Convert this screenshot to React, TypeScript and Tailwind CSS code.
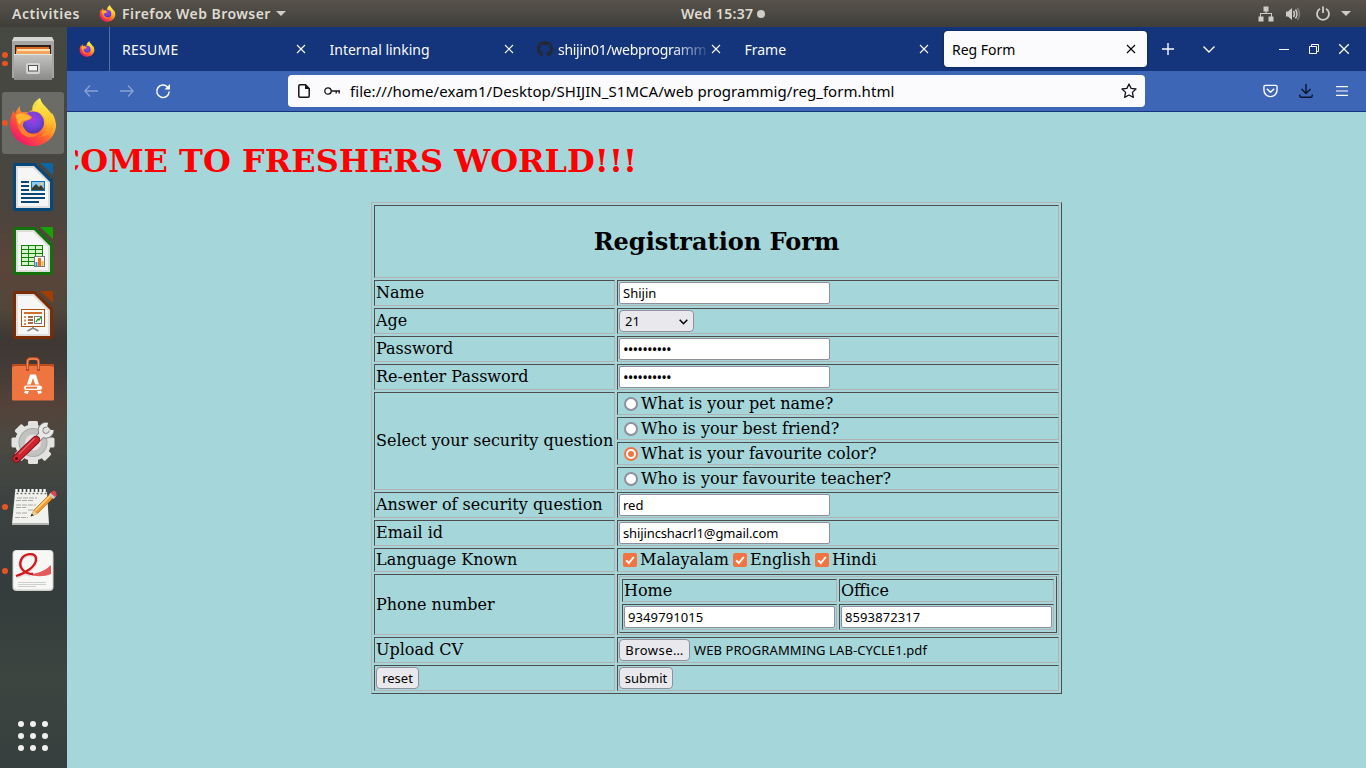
import React from 'react';

const ui = "font-['Noto_Sans','Open_Sans',sans-serif]";

function FirefoxLogo({ id, className }: { id: string; className: string }) {
  return (
    <svg viewBox="0 0 48 50" className={className}>
      <defs>
        <linearGradient id={`${id}-body`} x1="0.85" y1="0.1" x2="0.2" y2="0.95">
          <stop offset="0" stopColor="#fff04a" />
          <stop offset="0.35" stopColor="#ffb02c" />
          <stop offset="0.62" stopColor="#ff5c34" />
          <stop offset="1" stopColor="#f0136b" />
        </linearGradient>
        <radialGradient id={`${id}-globe`} cx="0.5" cy="0.35" r="0.7">
          <stop offset="0" stopColor="#a43be0" />
          <stop offset="0.5" stopColor="#7543dc" />
          <stop offset="1" stopColor="#4a35a8" />
        </radialGradient>
        <linearGradient id={`${id}-flame`} x1="0.5" y1="0" x2="0.6" y2="1">
          <stop offset="0" stopColor="#fff44f" />
          <stop offset="0.6" stopColor="#ffc52e" />
          <stop offset="1" stopColor="#ff8028" />
        </linearGradient>
      </defs>
      <path d="M11 9c-.5 3 0 5 2 6.500 2-.5 4-.5 6 0l5-3C30 8 29 4 31 1c1 6 6 8 9 13l2 4 1-2c3 5 4 9 4 13C46 41 36 49 24 49S1 39 1 27c0-5 1-9 3-12l1-2c0 2 0 3 1 4 1-3 3-6 5-8z" fill={`url(#${id}-body)`} />
      <path d="M31 1c-7 4-9 10-7 13 7 0 14 6 14 14 0 6-3 10-8 12 8 0 14-5 15-13 1-7-2-11-6-14-3-4-7-7-8-12z" fill={`url(#${id}-flame)`} opacity="0.9" />
      <circle cx="24" cy="25.500" r="11" fill={`url(#${id}-globe)`} />
      <path d="M6 18c4-3 9-3 13-1l4 3c-1 3-4 3-6 4-3 1-4 4-2 7 3 6 9 7 14 6-4 5-14 4-18-3-3-5-3-10-5-16z" fill="#ff7f2e" />
      <path d="M7 18c5-3 10-1 15 2 0 2-3 3-6 3-3 1-5 2-5 5-3-3-3-7-4-10z" fill="#ffb52f" />
    </svg>
  );
}

function FilesIcon() {
  return (
    <svg viewBox="0 0 44 46" className="h-[46px] w-11">
      <defs>
        <linearGradient id="cab" x1="0" y1="0" x2="0" y2="1">
          <stop offset="0" stopColor="#c4c4c2" />
          <stop offset="1" stopColor="#8b8b89" />
        </linearGradient>
      </defs>
      <path d="M3 1h38l2 4v37H1V5z" fill="#a5a5a3" />
      <path d="M3 1h38l2 4H1z" fill="#d4d4d2" />
      <rect x="4" y="9" width="36" height="10" fill="#2e211b" />
      <rect x="5" y="11" width="33" height="7" fill="#e06b26" />
      <rect x="6" y="13" width="33" height="2" fill="#ffe0b0" />
      <rect x="5" y="15" width="34" height="3" fill="#f2a55c" />
      <path d="M3 18h38v26H3z" fill="url(#cab)" />
      <path d="M3 18h38v1H3z" fill="#e6e6e4" />
      <rect x="15" y="27" width="14" height="11" rx="2" fill="#d4d4d2" />
      <rect x="17.500" y="29.500" width="9" height="5.500" fill="#f4f4f4" stroke="#555" />
    </svg>
  );
}

function OfficeDoc({ dark, fold, children }: { dark: string; fold: string; children: React.ReactNode }) {
  return (
    <svg viewBox="0 0 40 48" className="h-12 w-10">
      <path d="M2 0h20l18 17v29q0 2-2 2H2q-2 0-2-2V2q0-2 2-2z" fill={dark} />
      <path d="M3 3h18l16 16v26H3z" fill="#dededc" />
      <path d="M5 5h15l15 15v23H5z" fill="#f6f6f6" />
      <path d="M27 0h12q1 0 1 1v11z" fill={fold} />
      {children}
    </svg>
  );
}

function WriterIcon() {
  return (
    <OfficeDoc dark="#06487a" fold="#0d66a4">
      <path d="M8 19h8M8 23h8M8 27h8M8 31h24M8 35h24M8 39h18" stroke="#0a4673" strokeWidth="2" />
      <rect x="18.500" y="18.500" width="13" height="9" fill="#8ec8ee" stroke="#1272b4" />
      <path d="M19 27v-2l4-4 3 3 2-2 3 4v1z" fill="#3b3a2e" />
      <circle cx="28.500" cy="21" r="1.300" fill="#f7d25a" />
    </OfficeDoc>
  );
}

function CalcIcon() {
  return (
    <OfficeDoc dark="#14700b" fold="#18a303">
      <rect x="8.500" y="18.500" width="21" height="20" fill="#d3f5c9" stroke="#148007" />
      <path d="M8 22.500h22M8 26.500h22M8 30.500h22M8 34.500h22M15.500 18v21M22.500 18v21" stroke="#148007" />
      <rect x="21.500" y="29.500" width="10" height="10" fill="#fff" stroke="#777" />
      <path d="M23.500 39v-4" stroke="#2a8fd8" strokeWidth="2" />
      <path d="M26.500 39v-8" stroke="#ed6b1c" strokeWidth="3" />
      <path d="M29.500 39v-5" stroke="#f3b72c" strokeWidth="2" />
    </OfficeDoc>
  );
}

function ImpressIcon() {
  return (
    <OfficeDoc dark="#7a2c06" fold="#a33e03">
      <rect x="8.500" y="18.500" width="23" height="17" fill="#fff" stroke="#b4500f" />
      <path d="M11 22h18" stroke="#d26d2b" strokeWidth="2" />
      <path d="M12 25v9" stroke="#e08b52" strokeWidth="2" strokeDasharray="2 1.500" />
      <path d="M15 26h5M15 29h5M15 32h5" stroke="#8c3608" strokeWidth="1.700" />
      <rect x="21.500" y="25.500" width="7" height="7" fill="#fff" stroke="#777" />
      <path d="M23 31l2-3 1 1 2-3" fill="none" stroke="#149b10" strokeWidth="1.300" />
      <path d="M20 36v1.500M20 37l-5.500 3M20 37l5.500 3" fill="none" stroke="#888" strokeWidth="1.800" />
    </OfficeDoc>
  );
}

function SoftwareIcon() {
  return (
    <svg viewBox="0 0 42 44" className="h-11 w-[42px]">
      <rect x="0" y="7" width="42" height="36.500" rx="1" fill="#ee7440" />
      <path d="M0 7h42v3l-3-1H3l-3 1z" fill="#b94c1e" />
      <path d="M15.500 14V5q0-3.500 3.500-3.500h4Q26.500 1.500 26.500 5v9" fill="none" stroke="#b94c1e" strokeWidth="3" />
      <path d="M15.500 12V5q0-3 3.500-3h4q3.500 0 3.500 3v7" fill="none" stroke="#f28a5c" strokeWidth="1.300" />
      <path d="M14 36.500l5.500-17h3l5.500 17" fill="none" stroke="#fff" strokeWidth="3.800" />
      <rect x="11.500" y="28" width="19" height="5.500" rx="2.700" fill="#fff" stroke="#ee7440" />
      <path d="M14 30.700h11" stroke="#ee7440" strokeWidth="2" />
    </svg>
  );
}

function SettingsIcon() {
  return (
    <svg viewBox="0 0 44 46" className="h-[46px] w-11">
      <g fill="#e2e2e0">
        {[0, 45, 90, 135].map((a) => (
          <rect key={a} x="17" y="1" width="10" height="43" rx="1.500" transform={`rotate(${a} 22 22.500)`} />
        ))}
        <circle cx="22" cy="22.500" r="18" />
      </g>
      <circle cx="22" cy="22.500" r="14.500" fill="#a9a9a7" />
      <circle cx="22" cy="22.500" r="13.500" fill="#c2c2c0" />
      <circle cx="22" cy="22.500" r="8" fill="#e2e2e0" />
      <path d="M36.500 5A5.500 5.500 0 1 0 40.500 10" fill="none" stroke="#6f6f6d" strokeWidth="5.500" />
      <path d="M26.500 19l5-5" stroke="#6f6f6d" strokeWidth="7" />
      <path d="M36.500 5A5.500 5.500 0 1 0 40.500 10" fill="none" stroke="#e8e8e6" strokeWidth="4" />
      <path d="M26 19.500l6-6" stroke="#e8e8e6" strokeWidth="5.500" />
      <path d="M5.500 38.500L25 20" stroke="#861019" strokeWidth="8.500" strokeLinecap="round" />
      <path d="M5.500 38.500L25 20" stroke="#ce2430" strokeWidth="6.500" strokeLinecap="round" />
      <path d="M8 34L23.500 18.500" stroke="#e8626a" strokeWidth="1.300" />
      <circle cx="5.500" cy="38.500" r="1.500" fill="#4a1013" />
    </svg>
  );
}

function EditorIcon() {
  return (
    <svg viewBox="0 0 48 38" className="ml-[3px] h-[38px] w-12">
      <path d="M4 4h32l2 32H1z" fill="#f1f1ee" />
      <path d="M1 35h37v2H1z" fill="#b4b4b0" />
      <path d="M5.500 5V1M9.500 5V1M13.500 5V1M17.500 5V1M21.500 5V1M25.500 5V1M29.500 5V1M33.500 5V1" stroke="#f8f8f8" strokeWidth="2.400" />
      <path d="M5.500 5.500h30" stroke="#77756f" strokeDasharray="2 2" strokeWidth="1.500" />
      <path d="M6 10h20M5 12.500h18M5 17h20M5 19.500h10M17 22h8M5 25h12M4 29.500h13" stroke="#aaa9a5" strokeDasharray="5 1" />
      <path d="M20 28l3-6L40 5l3.500 3.500-17 17z" fill="#f29b33" stroke="#b96a13" strokeWidth="0.700" />
      <path d="M24 23L40.500 6.500" stroke="#ffd27d" strokeWidth="1.500" />
      <path d="M20 28l2.500-5.500 4 3.500z" fill="#e8cf9e" />
      <path d="M19.500 28.500l1.300-2.800 2 1.600z" fill="#222" />
      <path d="M38 6.500l2.500-2.500 4.500 4.500-2.500 2.500z" fill="#c9ccd1" />
      <path d="M40.500 4q2.500-2 4-.5t1 4l-1.500 1.500-4.500-4z" fill="#e0434e" />
    </svg>
  );
}

function ViewerIcon() {
  return (
    <svg viewBox="0 0 42 43" className="mb-[2px] h-[43px] w-[42px]">
      <rect x="0.500" y="1" width="41" height="41" rx="4" fill="#cfcfcd" />
      <rect x="1.500" y="1.500" width="39" height="39" rx="3.500" fill="#f7f7f6" />
      <path d="M16 25c9 0 17-3 23-9v9c-7 3-16 3-23 0z" fill="#e25a5a" />
      <path d="M4 28C14 25 25 18 24 10c-1-6-12-5-15 2-3 8 3 13 10 14" fill="none" stroke="#b9b9b9" strokeWidth="3.500" opacity="0.400" />
      <path d="M4 27C14 24 25 17 24 9c-1-6-12-5-15 2-3 8 4 14 12 14" fill="none" stroke="#d3171e" strokeWidth="2.300" />
      <path d="M6 33.500h28M6 35.500h28M6 37.500h18" stroke="#cfcfcd" />
    </svg>
  );
}

function DockItem({ children, running = 0, active = false }: { children: React.ReactNode; running?: number; active?: boolean }) {
  return (
    <div className="relative flex h-16 w-full shrink-0 items-center justify-center">
      <div className={active ? 'flex h-[62px] w-[62px] items-center justify-center rounded-[3px] bg-white/20' : 'flex items-center justify-center'}>
        {children}
      </div>
      <div className="absolute left-[2px] top-0 flex h-full flex-col items-center justify-center gap-[3px]">
        {Array.from({ length: running }, (_, i) => (
          <span key={i} className="h-[5.500px] w-[5.500px] rounded-full bg-[#e95420]" />
        ))}
      </div>
    </div>
  );
}

function Dock() {
  return (
    <nav className="flex w-[67px] shrink-0 flex-col bg-[linear-gradient(180deg,#464842_0%,#474640_17%,#4b443e_25%,#5c443a_32%,#51463a_38%,#3e3833_42%,#423b37_46%,#54423a_51%,#4b4941_56%,#3e4341_63%,#343c3c_76%,#3d4541_88%,#353f3d_100%)] pr-[1px]">
      <DockItem running={2}><FilesIcon /></DockItem>
      <DockItem running={1} active><FirefoxLogo id="dock" className="mb-[3px] h-[50px] w-12" /></DockItem>
      <DockItem><WriterIcon /></DockItem>
      <DockItem><CalcIcon /></DockItem>
      <DockItem><ImpressIcon /></DockItem>
      <DockItem><SoftwareIcon /></DockItem>
      <DockItem><SettingsIcon /></DockItem>
      <DockItem running={1}><EditorIcon /></DockItem>
      <DockItem running={1}><ViewerIcon /></DockItem>
      <div className="mx-auto mb-[17px] mt-auto grid grid-cols-3 gap-[6px]">
        {Array.from({ length: 9 }, (_, i) => <span key={i} className="h-[6px] w-[6px] rounded-full bg-[#f0f0ee]" />)}
      </div>
    </nav>
  );
}

function TopBar() {
  return (
    <header className="flex h-[27px] shrink-0 items-center bg-[linear-gradient(180deg,#57534b,#3f3e39)] text-[14px] font-semibold text-[#dfdbd2]">
      <div className="flex w-[681px] shrink-0 items-center pl-3">
        <span className="w-[87px] tracking-[0.550px]">Activities</span>
        <FirefoxLogo id="menu" className="h-[17px] w-[17px]" />
        <span className="ml-[6px] tracking-[0.450px]">Firefox Web Browser</span>
        <svg viewBox="0 0 10 5" className="ml-[5px] h-[5px] w-[10px]"><path d="M0 0h10L5 5z" fill="#cfccc6" /></svg>
      </div>
      <div className="flex items-center gap-1">
        <span className="tracking-[0.300px]">Wed 15:37</span>
        <span className="h-2 w-2 rounded-full bg-[#cfccc6]" />
      </div>
      <div className="flex flex-1 items-center justify-end pr-[15px]">
        <svg viewBox="0 0 16 16" className="h-4 w-4" fill="#cfccc6"><path d="M5.500 0.500h5v5H8.500V7H14v3.500h1.500v5h-5v-5H13V8H3v2.500h2.500v5h-5v-5H2V7h5.500V5.500h-2z" /></svg>
        <svg viewBox="0 0 16 16" className="ml-[11px] h-4 w-4" fill="none" stroke="#cfccc6">
          <path d="M1 5.500h2L7 2v12L3 10.500H1z" fill="#cfccc6" stroke="none" />
          <path d="M8.500 5q2 3 0 6" strokeWidth="1.500" /><path d="M10.500 3.500q3 4.500 0 9" strokeWidth="1.500" /><path d="M12.500 2q4 6 0 12" strokeWidth="1.500" opacity="0.400" />
        </svg>
        <svg viewBox="0 0 16 16" className="ml-[14px] h-4 w-4" fill="none" stroke="#cfccc6" strokeWidth="1.800"><path d="M5 2.700a6 6 0 1 0 6 0M8 .5v6.500" /></svg>
        <svg viewBox="0 0 10 5" className="ml-[10px] h-[5px] w-[10px]"><path d="M0 0h10L5 5z" fill="#cfccc6" /></svg>
      </div>
    </header>
  );
}

function Cross({ className }: { className: string }) {
  return <svg viewBox="0 0 10 10" className={className} fill="none" stroke="currentColor" strokeWidth="1.100"><path d="M1 1l8 8M9 1L1 9" /></svg>;
}

function Tab({ title, active = false, icon, tracking = '' }: { title: string; active?: boolean; icon?: React.ReactNode; tracking?: string }) {
  return (
    <div className={`flex shrink-0 items-center pl-2 ${active ? 'h-9 w-[203px] rounded-[4px] bg-[#fbfbfe] pr-[11px] text-black shadow-[0_0_3px_rgba(0,0,0,0.4)]' : 'h-full w-[207.500px] pr-[15.500px] text-[#fbfbfe]'}`}>
      {icon}
      <span className={`min-w-0 flex-1 overflow-hidden whitespace-nowrap text-[14px] ${tracking} ${icon ? '[mask-image:linear-gradient(90deg,black_75%,transparent_102%)]' : ''}`}>{title}</span>
      <Cross className={icon ? 'ml-[2px] h-[10px] w-[10px] shrink-0' : 'h-[10px] w-[10px] shrink-0'} />
    </div>
  );
}

function GithubMark() {
  return (
    <svg viewBox="0 0 16 16" className="mr-[5px] h-4 w-4 shrink-0" fill="#24292f">
      <path d="M8 0C3.580 0 0 3.580 0 8c0 3.540 2.290 6.530 5.470 7.590.4.070.55-.17.55-.38 0-.19-.01-.82-.01-1.490-2.010.37-2.530-.49-2.690-.94-.09-.23-.48-.94-.82-1.130-.28-.15-.68-.52-.01-.53.63-.01 1.080.58 1.230.82.72 1.210 1.870.87 2.330.66.07-.52.28-.87.51-1.070-1.780-.2-3.640-.89-3.640-3.950 0-.87.31-1.590.82-2.150-.08-.2-.36-1.020.08-2.120 0 0 .67-.21 2.200.82.64-.18 1.320-.27 2-.27s1.360.09 2 .27c1.530-1.040 2.200-.82 2.200-.82.44 1.100.16 1.920.08 2.120.51.56.82 1.270.82 2.150 0 3.070-1.870 3.750-3.650 3.950.29.25.54.73.54 1.480 0 1.070-.01 1.930-.01 2.200 0 .21.15.46.55.38A8.010 8.010 0 0 0 16 8c0-4.420-3.580-8-8-8z" />
    </svg>
  );
}

function TabStrip() {
  return (
    <div className="flex h-11 shrink-0 items-center bg-[#14357b]">
      <div className="flex h-full w-[43px] shrink-0 items-center justify-center border-r border-[#5470a8] pr-[2px]">
        <FirefoxLogo id="pin" className="h-4 w-4" />
      </div>
      <div className="flex h-full items-center pl-1">
        <Tab title="RESUME" tracking="tracking-[0.300px]" />
        <Tab title="Internal linking" />
        <Tab title="shijin01/webprogramm" icon={<GithubMark />} tracking="tracking-[-0.300px]" />
        <Tab title="Frame" />
        <Tab title="Reg Form" active />
      </div>
      <div className="flex flex-1 items-center text-[#fbfbfe]">
        <svg viewBox="0 0 12 12" className="ml-[15px] h-3 w-3" stroke="currentColor" strokeWidth="1.400"><path d="M6 0v12M0 6h12" /></svg>
        <svg viewBox="0 0 12 7" className="ml-[29px] h-[7px] w-3" fill="none" stroke="currentColor" strokeWidth="1.400"><path d="M.5.5L6 6 11.500.5" /></svg>
        <div className="ml-auto flex pr-[7px]">
          <span className="flex w-[30px] items-center justify-center"><span className="h-px w-[10px] bg-[#fbfbfe]" /></span>
          <span className="flex w-[30px] items-center justify-center">
            <svg viewBox="0 0 10 10" className="h-[10px] w-[10px]" fill="none" stroke="currentColor"><path d="M.5 2.500h7v7h-7zM2.500 2.500v-2h7v7h-2" /></svg>
          </span>
          <span className="flex w-[30px] items-center justify-center"><Cross className="h-3 w-3" /></span>
        </div>
      </div>
    </div>
  );
}

function NavBar() {
  const cell = 'flex h-full w-9 shrink-0 items-center justify-center';
  return (
    <div className="flex h-[41px] shrink-0 items-center border-b border-[#14357b] bg-[#3e66b7] pl-[6px] pr-[6px] text-[#fbfbfe]">
      <span className={cell}><svg viewBox="0 0 14 12" className="h-3 w-[14px] opacity-40" fill="none" stroke="currentColor" strokeWidth="1.300"><path d="M6 .5L.8 6 6 11.500M.8 6H14" /></svg></span>
      <span className={cell}><svg viewBox="0 0 14 12" className="h-3 w-[14px] opacity-40" fill="none" stroke="currentColor" strokeWidth="1.300"><path d="M8 .5L13.200 6 8 11.500M13.200 6H0" /></svg></span>
      <span className={cell}><svg viewBox="0 0 16 16" className="h-4 w-4" fill="none" stroke="currentColor" strokeWidth="1.500"><path d="M12.500 4A6.200 6.200 0 1 0 14.200 8.500" /><path d="M15 1v5.500H9.500z" fill="currentColor" stroke="none" /></svg></span>
      <div className="ml-[107px] flex h-8 w-[857px] shrink-0 items-center rounded-[4px] bg-[#fbfbfe] text-[#15141a]">
        <svg viewBox="0 0 12 14" className="ml-[10px] h-[14px] w-3" fill="none" stroke="currentColor" strokeWidth="1.500"><path d="M2 .8h5.500l3.700 3.700V12q0 1.200-1.200 1.200H2Q.8 13.200.8 12V2Q.8.8 2 .8z" /><path d="M7 0v5h5z" fill="currentColor" stroke="none" /></svg>
        <svg viewBox="0 0 16 8" className="ml-[14px] h-2 w-4" fill="none" stroke="currentColor" strokeWidth="1.300"><circle cx="4" cy="4" r="3.200" /><path d="M7 4h9M15.200 4v2.500M12.200 4v2.500" /></svg>
        <span className="ml-[10px] flex-1 whitespace-nowrap pt-px text-[15px] tracking-[0.050px] text-black">file:///home/exam1/Desktop/SHIJIN_S1MCA/web programmig/reg_form.html</span>
        <svg viewBox="0 0 16 16" className="mr-2 h-4 w-4" fill="none" stroke="currentColor" strokeWidth="1.300" strokeLinejoin="round"><path d="M8 1l2.100 4.400 4.900.6-3.600 3.400 1 4.900L8 12l-4.400 2.300 1-4.900L1 6l4.900-.6z" /></svg>
      </div>
      <div className="ml-auto flex h-full">
        <span className={cell}><svg viewBox="0 0 16 14" className="h-[14px] w-[15px]" fill="none" stroke="currentColor" strokeWidth="1.500"><path d="M2.500 1h11q1.500 0 1.500 1.500V6a7 7 0 0 1-14 0V2.500Q1 1 2.500 1z" /><path d="M4.500 5L8 8.300 11.500 5" strokeLinecap="round" /></svg></span>
        <span className={`${cell} text-[#0b1430]`}><svg viewBox="0 0 14 14" className="h-[14px] w-[14px]" fill="none" stroke="currentColor" strokeWidth="1.400"><path d="M7 0v9.500M2.500 5L7 9.500 11.500 5M.8 10.500v1.200q0 1.500 1.500 1.500h9.400q1.500 0 1.500-1.500v-1.200" /></svg></span>
        <span className={cell}><svg viewBox="0 0 12 10" className="h-[10px] w-3" stroke="currentColor" strokeWidth="1.200"><path d="M0 .6h12M0 5h12M0 9.400h12" /></svg></span>
      </div>
    </div>
  );
}

const cellBorder = 'border border-t-[#4d4d4d] border-l-[#4d4d4d] border-b-[#b2b2b2] border-r-[#b2b2b2] px-px pt-px';
const tableBorder = 'border border-t-[#b2b2b2] border-l-[#b2b2b2] border-b-[#4d4d4d] border-r-[#4d4d4d]';

function Cell({ children, className = 'pb-px', rowSpan, colSpan }: { children: React.ReactNode; className?: string; rowSpan?: number; colSpan?: number }) {
  return <td rowSpan={rowSpan} colSpan={colSpan} className={`${cellBorder} align-middle leading-[19px] ${className}`}>{children}</td>;
}

function Label({ children, rowSpan }: { children: React.ReactNode; rowSpan?: number }) {
  return <Cell rowSpan={rowSpan} className="whitespace-nowrap pb-[2px]">{children}</Cell>;
}

function Field({ value, type = 'text', tracking = 'text-[13px]' }: { value: string; type?: string; tracking?: string }) {
  return <input type={type} defaultValue={value} className={`block h-[22px] w-[211px] rounded-[2px] border border-[#8f8f9d] bg-white px-[3px] leading-[18px] text-black outline-none ${ui} ${tracking}`} />;
}

function Choice({ label, checked = false }: { label: string; checked?: boolean }) {
  return (
    <label className="flex h-[19px] items-center pl-[5px]">
      <span className={`mr-[3px] mt-px flex h-[14px] w-[14px] items-center justify-center rounded-full border-2 bg-white ${checked ? 'border-[#f27443]' : 'border-[#8f8f9d]'}`}>
        {checked && <span className="h-[6px] w-[6px] rounded-full bg-[#f27443]" />}
      </span>
      {label}
    </label>
  );
}

function Check({ label }: { label: string }) {
  return (
    <label className="flex items-center">
      <svg viewBox="0 0 14 14" className="mr-[3px] h-[14px] w-[14px]"><rect width="14" height="14" rx="2" fill="#f27443" /><path d="M3.200 7.300L5.800 10l5-6" fill="none" stroke="#fff" strokeWidth="1.900" /></svg>
      {label}
    </label>
  );
}

function Push({ label, className }: { label: string; className: string }) {
  return <button type="button" className={`block h-[22px] whitespace-nowrap rounded-[4px] border border-[#8f8f9d] bg-[#e9e9ed] pt-px text-center text-[13px] leading-[19px] text-black ${ui} ${className}`}>{label}</button>;
}

function RegistrationForm() {
  return (
    <table className={`ml-[304px] w-[691px] table-fixed border-separate border-spacing-[2px] ${tableBorder}`}>
      <colgroup><col className="w-[241px]" /><col className="w-[442px]" /></colgroup>
      <tbody>
        <tr className="h-[73px]"><Cell colSpan={2} className="pb-px text-center"><h2 className="text-2xl font-bold leading-7">Registration Form</h2></Cell></tr>
        <tr className="h-[26px]"><Label>Name</Label><Cell><Field value="Shijin" /></Cell></tr>
        <tr className="h-[26px]">
          <Label>Age</Label>
          <Cell>
            <div className={`flex h-[22px] w-[75px] items-center justify-between rounded-[4px] border border-[#8f8f9d] bg-[#e9e9ed] pl-[5px] pr-[5px] pt-px text-[13px] ${ui}`}>
              21<svg viewBox="0 0 9 6" className="h-[6px] w-[9px]" fill="none" stroke="#000" strokeWidth="1.600"><path d="M.7.7l3.800 4 3.800-4" /></svg>
            </div>
          </Cell>
        </tr>
        <tr className="h-[26px]"><Label>Password</Label><Cell><Field type="password" value="shijin1234" tracking="text-[15px] tracking-[-0.850px]" /></Cell></tr>
        <tr className="h-[26px]"><Label>Re-enter Password</Label><Cell><Field type="password" value="shijin1234" tracking="text-[15px] tracking-[-0.850px]" /></Cell></tr>
        <tr className="h-[23px]"><Label rowSpan={4}>Select your security question</Label><Cell><Choice label="What is your pet name?" /></Cell></tr>
        <tr className="h-[23px]"><Cell><Choice label="Who is your best friend?" /></Cell></tr>
        <tr className="h-[23px]"><Cell><Choice label="What is your favourite color?" checked /></Cell></tr>
        <tr className="h-[23px]"><Cell><Choice label="Who is your favourite teacher?" /></Cell></tr>
        <tr className="h-[26px]"><Label>Answer of security question</Label><Cell><Field value="red" /></Cell></tr>
        <tr className="h-[26px]"><Label>Email id</Label><Cell><Field value="shijincshacrl1@gmail.com" tracking="text-[13px] tracking-[-0.120px]" /></Cell></tr>
        <tr className="h-6"><Label>Language Known</Label><Label><div className="flex gap-[4px] pl-[4px]"><Check label="Malayalam" /><Check label="English" /><Check label="Hindi" /></div></Label></tr>
        <tr className="h-[61px]">
          <Cell>Phone number</Cell>
          <Cell>
            <table className={`w-[438px] table-fixed border-separate border-spacing-[2px] ${tableBorder}`}>
              <tbody>
                <tr className="h-[23px]"><Cell>Home</Cell><Cell>Office</Cell></tr>
                <tr className="h-[26px]"><Cell><Field value="9349791015" tracking="text-[13px] tracking-[0.100px]" /></Cell><Cell><Field value="8593872317" tracking="text-[13px] tracking-[0.100px]" /></Cell></tr>
              </tbody>
            </table>
          </Cell>
        </tr>
        <tr className="h-[26px]">
          <Label>Upload CV</Label>
          <Cell>
            <div className="flex items-center">
              <Push label="Browse…" className="w-[71px] tracking-[0.450px]" />
              <span className={`ml-[4px] mt-px whitespace-nowrap text-[13px] tracking-[0.080px] ${ui}`}>WEB PROGRAMMING LAB-CYCLE1.pdf</span>
            </div>
          </Cell>
        </tr>
        <tr className="h-[26px]"><Cell><Push label="reset" className="w-[43px]" /></Cell><Cell><Push label="submit" className="w-[54px]" /></Cell></tr>
      </tbody>
    </table>
  );
}

export default function App() {
  return (
    <div className={`flex h-[768px] w-[1366px] flex-col overflow-hidden ${ui}`}>
      <TopBar />
      <div className="flex min-h-0 flex-1">
        <Dock />
        <div className="flex min-w-0 flex-1 flex-col">
          <TabStrip />
          <NavBar />
          <main className="flex-1 overflow-hidden bg-[#a5d6da] font-['DejaVu_Serif',serif] text-base text-black">
            <div className="ml-2 mt-[30px] flex w-[562px] justify-end overflow-hidden">
              <h1 className="shrink-0 whitespace-nowrap text-[32px] font-bold leading-[38px] text-[#ff0000]">WELCOME TO FRESHERS WORLD!!!</h1>
            </div>
            <div className="mt-[22px]"><RegistrationForm /></div>
          </main>
        </div>
      </div>
    </div>
  );
}
